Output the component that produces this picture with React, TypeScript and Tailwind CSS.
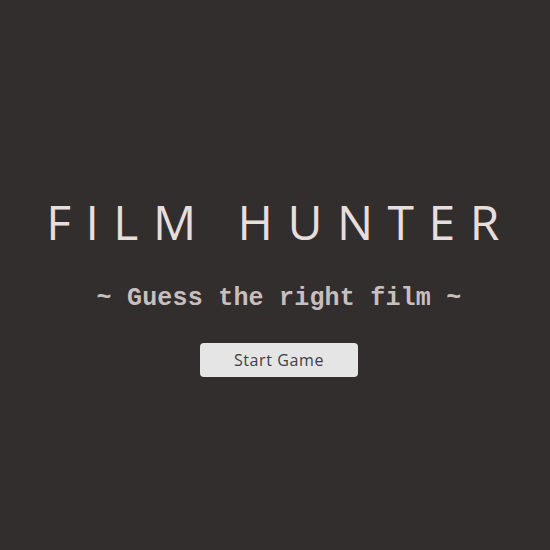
export default function App() {
  return (
    <div className="w-[550px] h-[550px] bg-[#322e2e] flex flex-col items-center pt-[194px]">
      <h1 className="font-['Open_Sans',sans-serif] text-[48px] leading-[56px] text-[#e6dddd] tracking-[14.5px] pl-[10px] font-medium">
        FILM HUNTER
      </h1>
      <div className="pl-[8px] flex flex-col items-center">
        <p className="mt-[34px] font-['Liberation_Mono',monospace] text-[25px] leading-[30px] tracking-[0.2px] font-bold text-[#c8bebe]">
          ~ Guess the right film ~
        </p>
        <button className="mt-[29px] w-[158px] h-[34px] rounded bg-[#e5e5e5] text-[#3a3f47] text-[16px] tracking-[0.6px] font-['Open_Sans',sans-serif]">
          Start Game
        </button>
      </div>
    </div>
  );
}
